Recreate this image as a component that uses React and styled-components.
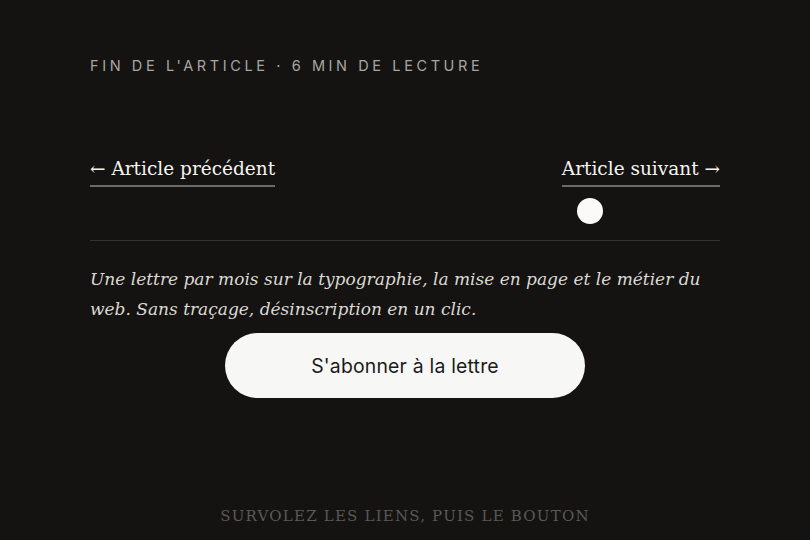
import React from "react";
import styled, { createGlobalStyle } from "styled-components";

const GlobalStyle = createGlobalStyle`
  html, body {
    margin: 0;
    padding: 0;
    background: #141312;
  }
  body {
    min-height: 540px;
  }
`;

const Page = styled.div`
  position: relative;
  width: 810px;
  height: 540px;
  background: #141312;
  display: flex;
  flex-direction: column;
  align-items: center;
  overflow: hidden;
`;

const Column = styled.main`
  width: 630px;
  padding-top: 57px;
  display: flex;
  flex-direction: column;
`;

const Meta = styled.div`
  font-family: Inter, "Liberation Sans", sans-serif;
  font-size: 14.5px;
  letter-spacing: 3.6px;
  color: #a9a6a1;
  text-transform: uppercase;
  line-height: 18px;
`;

const NavRow = styled.nav`
  display: flex;
  justify-content: space-between;
  align-items: flex-start;
  margin-top: 81px;
  padding-bottom: 53px;
  border-bottom: 1px solid #353331;
`;

const NavLink = styled.a`
  font-family: "DejaVu Serif", Georgia, serif;
  font-size: 18.5px;
  line-height: 26px;
  color: #f6f4f0;
  text-decoration: none;
  padding-bottom: 3px;
  border-bottom: 2px solid #6c6a67;
`;

const Blurb = styled.p`
  margin: 23px 0 0;
  font-family: "DejaVu Serif", Georgia, serif;
  font-style: italic;
  font-size: 17px;
  line-height: 30px;
  color: #dcd9d4;
`;

const SubscribeButton = styled.button`
  align-self: center;
  margin-top: 9px;
  width: 360px;
  height: 65px;
  border: none;
  border-radius: 33px;
  background: #f7f7f5;
  color: #1b1a19;
  font-family: Inter, "Liberation Sans", sans-serif;
  font-size: 19.4px;
  letter-spacing: 0.2px;
  cursor: pointer;
`;

const Hint = styled.footer`
  margin-top: auto;
  padding-bottom: 15px;
  font-family: "DejaVu Serif", Georgia, serif;
  font-size: 15px;
  letter-spacing: 0.08em;
  color: #5b5956;
  text-transform: uppercase;
`;

const CursorDot = styled.div`
  position: absolute;
  left: 577px;
  top: 198px;
  width: 26px;
  height: 26px;
  border-radius: 50%;
  background: #fbfaf8;
  pointer-events: none;
`;

export default function App() {
  return (
    <Page>
      <GlobalStyle />
      <Column>
        <Meta>Fin de l'article · 6 min de lecture</Meta>
        <NavRow>
          <NavLink href="#">← Article précédent</NavLink>
          <NavLink href="#">Article suivant →</NavLink>
        </NavRow>
        <Blurb>
          Une lettre par mois sur la typographie, la mise en page et le métier du
          web. Sans traçage, désinscription en un clic.
        </Blurb>
        <SubscribeButton>S'abonner à la lettre</SubscribeButton>
      </Column>
      <Hint>Survolez les liens, puis le bouton</Hint>
      <CursorDot />
    </Page>
  );
}
